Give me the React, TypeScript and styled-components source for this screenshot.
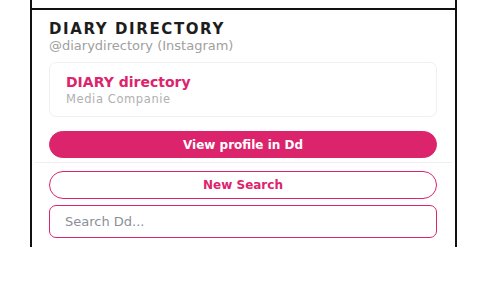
import React from "react";
import styled, { createGlobalStyle } from "styled-components";

const Global = createGlobalStyle`
  html, body { margin: 0; padding: 0; background: #fff; }
  body { font-family: "DejaVu Sans", "Liberation Sans", sans-serif; }
  * { box-sizing: border-box; }
`;

const PINK = "#dc246d";

const Frame = styled.div`
  margin-left: 30px;
  width: 427px;
  height: 247px;
  border-left: 2px solid #111;
  border-right: 2px solid #111;
  display: flex;
  flex-direction: column;
`;

const TopStrip = styled.div`
  height: 10px;
  border-bottom: 2px solid #111;
  flex-shrink: 0;
`;

const Body = styled.div`
  padding: 10px 0 0;
  display: flex;
  flex-direction: column;
`;

const Section = styled.div`
  padding: 0 18px 0 17px;
  display: flex;
  flex-direction: column;
`;

const Title = styled.div`
  font-size: 15px;
  font-weight: 600;
  color: #1d1d1d;
  line-height: 18px;
  letter-spacing: 1.6px;
`;

const Handle = styled.div`
  font-size: 13px;
  color: #a0a0a0;
  line-height: 16px;
`;

const Card = styled.div`
  margin-top: 8px;
  height: 55px;
  border: 1px solid #f0f0f0;
  border-radius: 7px;
  padding: 10px 16px 0;
  display: flex;
  flex-direction: column;
`;

const CardName = styled.div`
  font-size: 14px;
  font-weight: 600;
  color: ${PINK};
  line-height: 18px;
`;

const CardType = styled.div`
  font-size: 11.5px;
  letter-spacing: 0.6px;
  color: #b0b0b0;
  line-height: 14px;
  margin-top: 1px;
`;

const PillButton = styled.button<{ $filled?: boolean; $mt?: number }>`
  margin-top: ${(p) => p.$mt ?? 0}px;
  height: ${(p) => (p.$filled ? 27 : 28)}px;
  width: 100%;
  border-radius: 14px;
  border: 1.5px solid ${PINK};
  background: ${(p) => (p.$filled ? PINK : "#fff")};
  color: ${(p) => (p.$filled ? "#fff" : PINK)};
  font-family: "DejaVu Sans", sans-serif;
  font-weight: 700;
  font-size: 12px;
  padding: 0;
  display: flex;
  align-items: center;
  justify-content: center;
`;

const Divider = styled.div`
  height: 1px;
  background: #efefef;
  margin: 4px 3px 8px;
`;

const SearchInput = styled.input`
  margin-top: 6px;
  height: 33px;
  width: 100%;
  border: 1.5px solid ${PINK};
  border-radius: 7px;
  padding: 0 15px;
  font-family: "DejaVu Sans", sans-serif;
  font-size: 13px;
  color: #333;
  outline: none;
  &::placeholder { color: #8a8f99; }
`;

export default function App() {
  return (
    <>
      <Global />
      <Frame>
        <TopStrip />
        <Body>
          <Section>
            <Title>DIARY DIRECTORY</Title>
            <Handle>@diarydirectory (Instagram)</Handle>
            <Card>
              <CardName>DIARY directory</CardName>
              <CardType>Media Companie</CardType>
            </Card>
            <PillButton $filled $mt={14}>View profile in Dd</PillButton>
          </Section>
          <Divider />
          <Section>
            <PillButton>New Search</PillButton>
            <SearchInput placeholder="Search Dd..." />
          </Section>
        </Body>
      </Frame>
    </>
  );
}
